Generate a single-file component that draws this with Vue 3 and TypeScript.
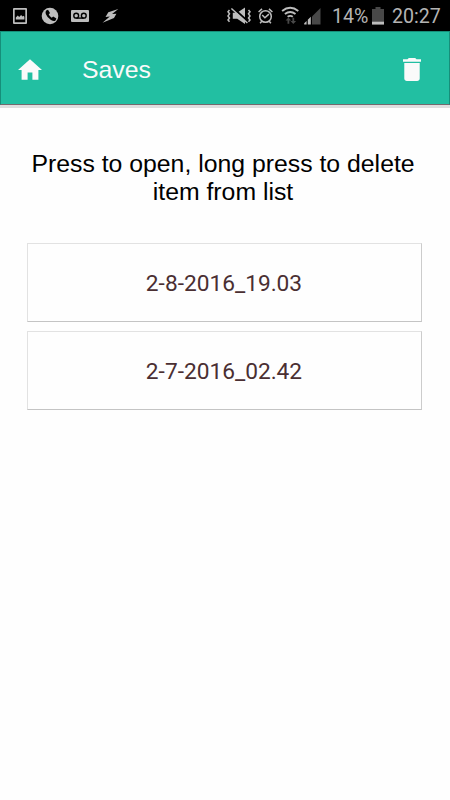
<script setup lang="ts">
import { ref } from 'vue'

interface SaveItem {
  id: number
  name: string
}

const saves = ref<SaveItem[]>([
  { id: 1, name: '2-8-2016_19.03' },
  { id: 2, name: '2-7-2016_02.42' },
])
</script>

<template>
  <div class="screen">
    <div class="status">
      <svg class="notifications" viewBox="0 0 130 31">
        <path d="M14 8h12a1 1 0 0 1 1 1v14a1 1 0 0 1-1 1H14a1 1 0 0 1-1-1V9a1 1 0 0 1 1-1zm.7 1.7v12.600h10.600V9.700zM15.800 19.600v-2.100l2-2 1.400 1.600 1.900-2.100 1.400 1.600 1-.9.9 1v2.900z" fill-rule="evenodd" />
        <circle cx="50" cy="16" r="8.3" />
        <path class="cut" d="M46.2 10.500l1.800-.8 2 3.400-1.300 1.500q1 2 3 3.100l1.500-1.200 3.200 2-.9 1.900q-1.500 1.300-4.500-.4-3.800-2.200-5.200-6-.7-2.400.4-3.500z" />
        <rect x="71" y="10" width="18" height="12" rx="1" />
        <g class="tape"><circle cx="76.2" cy="15.7" r="2.4" /><circle cx="83.8" cy="15.7" r="2.4" /><path d="M76.2 18.100h7.600" /></g>
        <path d="M118.300 9l-10 3.200-2.800 4.800 4.300-.4-7.300 6.200 11.500-4.800 2.400-4.300-4.300.3z" />
      </svg>
      <svg class="system" viewBox="226 0 98 31">
        <path d="M232.800 12.800h4.400l7.800-5.300v16.600l-7.800-5.300h-4.400z" />
        <path class="slash" d="M232.500 7.600l15 13.500" />
        <path class="line" d="M231.400 8.500l16 14.500M229.500 10l-1.500 1.800 1.500 2-1.500 2.200 1.500 2-1.500 2 1.500 1.800M248.500 10l1.500 1.800-1.500 2 1.500 2.200-1.500 2 1.500 2-1.500 1.800" />
        <g class="line"><circle cx="265.5" cy="16.5" r="5.800" /><path d="M258.600 12l3.400-3.100M272.400 12L269 8.900M262.200 15l2.700 2.700 4-3.600M261.800 21.300l-1.700 1.900M269.200 21.300l1.700 1.900" /></g>
        <g class="wifi"><path d="M282.100 11q8.100-6.500 16.200 0M284.900 14q5.300-4.100 10.600 0M287.600 16.800q2.600-1.800 5.200 0" /></g>
        <path class="dim" d="M288.400 17.500l2.800 3h-1.900v3.200h-1.800v-3.200h-1.900zM293.300 24l2.800-3h-1.900v-3.200h-1.800V21h-1.900z" />
        <path class="dim" d="M320.500 8v16.400H312v-8z" />
        <path d="M304.200 24.400v-1.200l2.400-2.200v3.400zM307.800 24.400v-4.600l3-3v7.600z" />
      </svg>
      <span class="percent">14%</span>
      <svg class="battery" viewBox="0 0 12 18"><path class="dim" d="M3.500 0h5v2H12v15.500H0V2h3.500z" /><path d="M0 14.700h12v2.800H0z" /></svg>
      <span class="time">20:27</span>
    </div>

    <header class="bar">
      <button class="icon-button" aria-label="Home">
        <svg class="home" viewBox="2 3 20 17"><path d="M10 20v-6h4v6h5v-8h3L12 3 2 12h3v8z" /></svg>
      </button>
      <h1>Saves</h1>
      <button class="icon-button" aria-label="Delete">
        <svg class="trash" viewBox="5 3 14 18" preserveAspectRatio="none"><path d="M6 19c0 1.100.9 2 2 2h8c1.100 0 2-.9 2-2V7H6zM19 4h-3.500l-1-1h-5l-1 1H5v2h14z" /></svg>
      </button>
    </header>

    <main>
      <p class="hint">Press to open, long press to delete item from list</p>
      <ul>
        <li v-for="save in saves" :key="save.id">{{ save.name }}</li>
      </ul>
    </main>
  </div>
</template>

<style>
body {
  margin: 0;
  background: #fefefe;
}
</style>

<style scoped>
.screen {
  width: 450px;
  height: 800px;
  background: #fefefe;
  font-family: 'Liberation Sans', Arial, sans-serif;
  overflow: hidden;
}
.status {
  height: 31px;
  background: #000;
  display: flex;
  align-items: flex-start;
  color: #b4b4b4;
  font: 400 19.6px/34px Roboto, sans-serif;
}
.status svg {
  fill: #bdbdbd;
  flex: none;
}
.notifications {
  width: 130px;
  height: 31px;
}
.system {
  width: 98px;
  height: 31px;
  margin-left: 96px;
}
.status .cut {
  fill: #000;
}
.tape {
  fill: none;
  stroke: #000;
  stroke-width: 1.4;
}
.slash {
  stroke: #000;
  stroke-width: 2;
}
.line {
  fill: none;
  stroke: #bdbdbd;
  stroke-width: 1.5;
}
.wifi {
  fill: none;
  stroke: #bdbdbd;
  stroke-width: 1.9;
}
.status .dim {
  fill: #484848;
}
.percent {
  width: 40px;
  margin-left: 8px;
}
.battery {
  width: 12px;
  height: 18px;
  margin-top: 7px;
}
.time {
  margin-left: 8px;
}
.bar {
  box-sizing: border-box;
  height: 74px;
  display: flex;
  align-items: center;
  padding: 2px 28px 0 16.5px;
  background: #22bfa2;
  border: 1px solid #168f7a;
  border-bottom-color: #75696e;
  box-shadow: 0 3px #dfdedf;
}
.icon-button {
  display: flex;
  padding: 0;
  border: 0;
  background: none;
}
.icon-button svg {
  fill: #fafafa;
}
.home {
  width: 24px;
  height: 21px;
}
.trash {
  width: 18px;
  height: 23px;
}
h1 {
  flex: 1;
  margin: 0 0 0 40.5px;
  padding-top: 2px;
  color: #fafafa;
  font-size: 24.8px;
  font-weight: 400;
  line-height: 28px;
}
main {
  padding: 45px 28px 0 27px;
}
.hint {
  margin: 0 -2px 0 -5px;
  color: #000;
  font-size: 24.8px;
  line-height: 28px;
  text-align: center;
}
ul {
  display: flex;
  flex-direction: column;
  gap: 9px;
  margin: 37px 0 0;
  padding: 0;
  list-style: none;
}
li {
  box-sizing: border-box;
  height: 79px;
  padding-right: 1px;
  border: 1px solid #e2e2e2;
  border-right-color: #ccc;
  border-bottom-color: #c4c4c4;
  background: #fefefe;
  color: #4a2f32;
  font: 400 22.7px/80px Roboto, sans-serif;
  text-align: center;
}
</style>
